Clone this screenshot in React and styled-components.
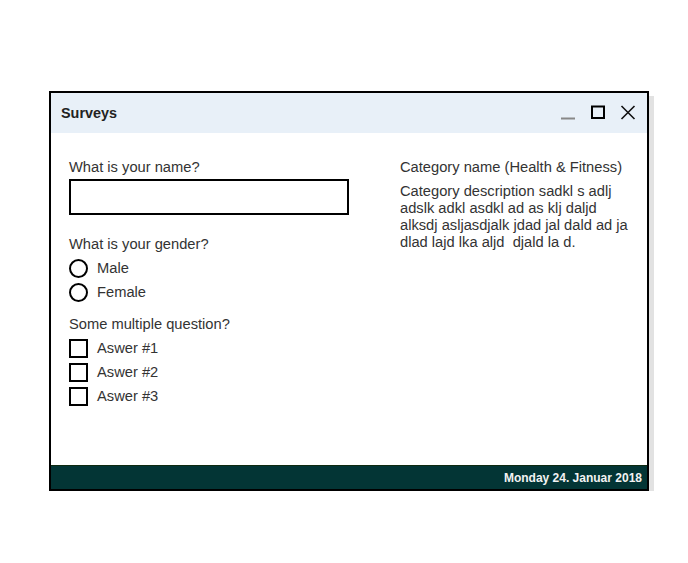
import React from "react";
import styled, { createGlobalStyle } from "styled-components";

const Global = createGlobalStyle`
  html, body { margin: 0; padding: 0; background: #fff; }
  body { font-family: "Liberation Sans", Arial, sans-serif; }
  * { box-sizing: border-box; }
`;

const Page = styled.div`
  padding: 91px 0 0 49px;
`;

const Window = styled.div`
  width: 600px;
  height: 400px;
  border: 2px solid #000;
  background: #fff;
  box-shadow: 5px 5px 0 #e2e2e2;
  display: flex;
  flex-direction: column;
`;

const TitleBar = styled.div`
  height: 40px;
  background: #e8f0f8;
  display: flex;
  align-items: center;
  justify-content: space-between;
  padding: 0 11px 0 10px;
`;

const Title = styled.div`
  font-size: 14.4px;
  font-weight: bold;
  color: #222;
`;

const Controls = styled.div`
  display: flex;
  align-items: center;
  gap: 14px;
`;

const CtrlIcon = styled.svg`
  display: block;
  width: 16px;
  height: 16px;
`;

const Content = styled.div`
  flex: 1;
  display: grid;
  grid-template-columns: 331px 1fr;
  padding: 26px 18px 0 18px;
  color: #333;
  font-size: 14.7px;
  line-height: 17px;
`;

const Column = styled.div`
  display: flex;
  flex-direction: column;
`;

const Question = styled.div`
  margin-bottom: ${(p) => p.$gap ?? 3}px;
`;

const Group = styled.div`
  display: flex;
  flex-direction: column;
  margin-bottom: ${(p) => p.$mb || 0}px;
`;

const TextBox = styled.div`
  width: 280px;
  height: 36px;
  border: 2px solid #000;
`;

const Option = styled.div`
  height: 24px;
  display: flex;
  align-items: center;
  gap: 9px;
`;

const Radio = styled.span`
  width: 19px;
  height: 19px;
  border: 2px solid #000;
  border-radius: 50%;
  display: inline-block;
`;

const Check = styled.span`
  width: 19px;
  height: 19px;
  border: 2px solid #000;
  display: inline-block;
`;

const CatTitle = styled.div`
  margin-bottom: 7px;
`;

const CatDesc = styled.div`
  width: 230px;
  white-space: pre-wrap;
`;

const Footer = styled.div`
  height: 24px;
  background: #033535;
  border-top: 1px solid #0e2a10;
  display: flex;
  align-items: center;
  justify-content: flex-end;
  padding-right: 5px;
  color: #f2f2f2;
  font-size: 12px;
  font-weight: bold;
`;

export default function App() {
  return (
    <>
      <Global />
      <Page>
        <Window>
          <TitleBar>
            <Title>Surveys</Title>
            <Controls>
              <CtrlIcon viewBox="0 0 16 16">
                <line x1="1" y1="13.5" x2="15" y2="13.5" stroke="#888" strokeWidth="2" />
              </CtrlIcon>
              <CtrlIcon viewBox="0 0 16 16">
                <rect x="2" y="1.5" width="12" height="11.5" fill="none" stroke="#000" strokeWidth="2" />
              </CtrlIcon>
              <CtrlIcon viewBox="0 0 16 16">
                <path d="M1.5 1 L14.5 14 M14.5 1 L1.5 14" stroke="#111" strokeWidth="1.6" fill="none" />
              </CtrlIcon>
            </Controls>
          </TitleBar>
          <Content>
            <Column>
              <Group $mb={21}>
                <Question $gap={3}>What is your name?</Question>
                <TextBox />
              </Group>
              <Group $mb={12}>
                <Question>What is your gender?</Question>
                <Option><Radio />Male</Option>
                <Option><Radio />Female</Option>
              </Group>
              <Group>
                <Question>Some multiple question?</Question>
                <Option><Check />Aswer #1</Option>
                <Option><Check />Aswer #2</Option>
                <Option><Check />Aswer #3</Option>
              </Group>
            </Column>
            <Column>
              <CatTitle>Category name (Health &amp; Fitness)</CatTitle>
              <CatDesc>
                {"Category description sadkl s adlj adslk adkl asdkl ad as klj daljd alksdj asljasdjalk jdad jal dald ad ja dlad lajd lka aljd  djald la d."}
              </CatDesc>
            </Column>
          </Content>
          <Footer>Monday 24. Januar 2018</Footer>
        </Window>
      </Page>
    </>
  );
}
